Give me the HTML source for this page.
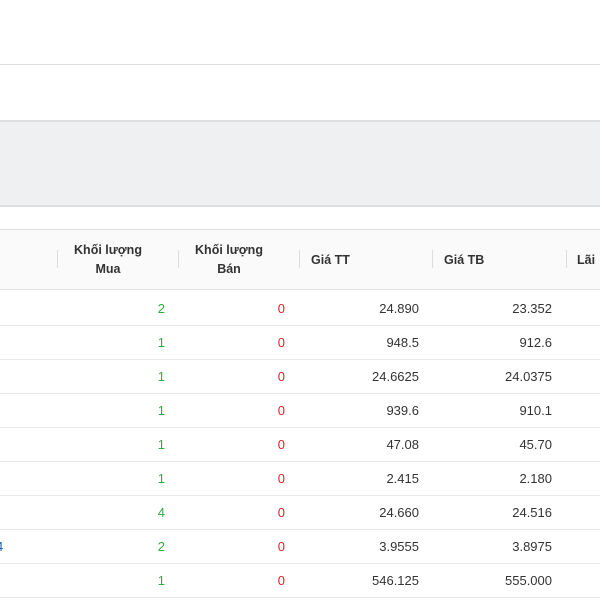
<!DOCTYPE html>
<html><head><meta charset="utf-8"><style>
body{margin:0;width:600px;height:600px;overflow:hidden;background:#fff;font-family:"Liberation Sans",sans-serif;font-size:13px;color:#333;position:relative}
.a{position:absolute}
.hd{top:229px;left:0;width:600px;height:59px;background:#fafafa;border-top:1px solid #ddd;border-bottom:1px solid #e3e3e3}
.sep{position:absolute;top:20px;width:1px;height:18px;background:#ddd}
.ht{position:absolute;font-weight:bold;font-size:12.5px;color:#333;line-height:19px}
.row{position:absolute;left:0;width:600px;height:33px;border-bottom:1px solid #e8e8e8}
.c{position:absolute;top:9px;text-align:right;line-height:16px}
.g{color:#2fae3f}.r{color:#e5202b}
</style></head><body>
<div class="a" style="top:64px;left:0;width:600px;height:1px;background:#ddd"></div>
<div class="a" style="top:120px;left:0;width:600px;height:83px;background:#eef0f2;border-top:2px solid #dde0e3;border-bottom:2px solid #dde0e3"></div>
<div class="a hd">
<div class="sep" style="left:57px"></div><div class="sep" style="left:178px"></div><div class="sep" style="left:299px"></div><div class="sep" style="left:432px"></div><div class="sep" style="left:566px"></div>
<div class="ht" style="left:64px;top:11px;width:88px;text-align:center">Khối lượng<br>Mua</div>
<div class="ht" style="left:186px;top:11px;width:86px;text-align:center">Khối lượng<br>Bán</div>
<div class="ht" style="left:311px;top:21px">Giá TT</div>
<div class="ht" style="left:444px;top:21px">Giá TB</div>
<div class="ht" style="left:577px;top:21px">Lãi</div>
</div>
<div id="rows"></div>
<script>
var d=[["2","24.890","23.352"],["1","948.5","912.6"],["1","24.6625","24.0375"],["1","939.6","910.1"],["1","47.08","45.70"],["1","2.415","2.180"],["4","24.660","24.516"],["2","3.9555","3.8975"],["1","546.125","555.000"]];
var h="";d.forEach(function(r,i){var t=292+i*34;h+='<div class="row" style="top:'+t+'px">'+(i==7?'<div class="c" style="left:-4px;color:#1a5aa0">4</div>':'')+'<div class="c g" style="right:435px">'+r[0]+'</div><div class="c r" style="right:315px">0</div><div class="c" style="right:181px">'+r[1]+'</div><div class="c" style="right:48px">'+r[2]+'</div></div>';});
document.getElementById("rows").innerHTML=h;
</script>
</body></html>
